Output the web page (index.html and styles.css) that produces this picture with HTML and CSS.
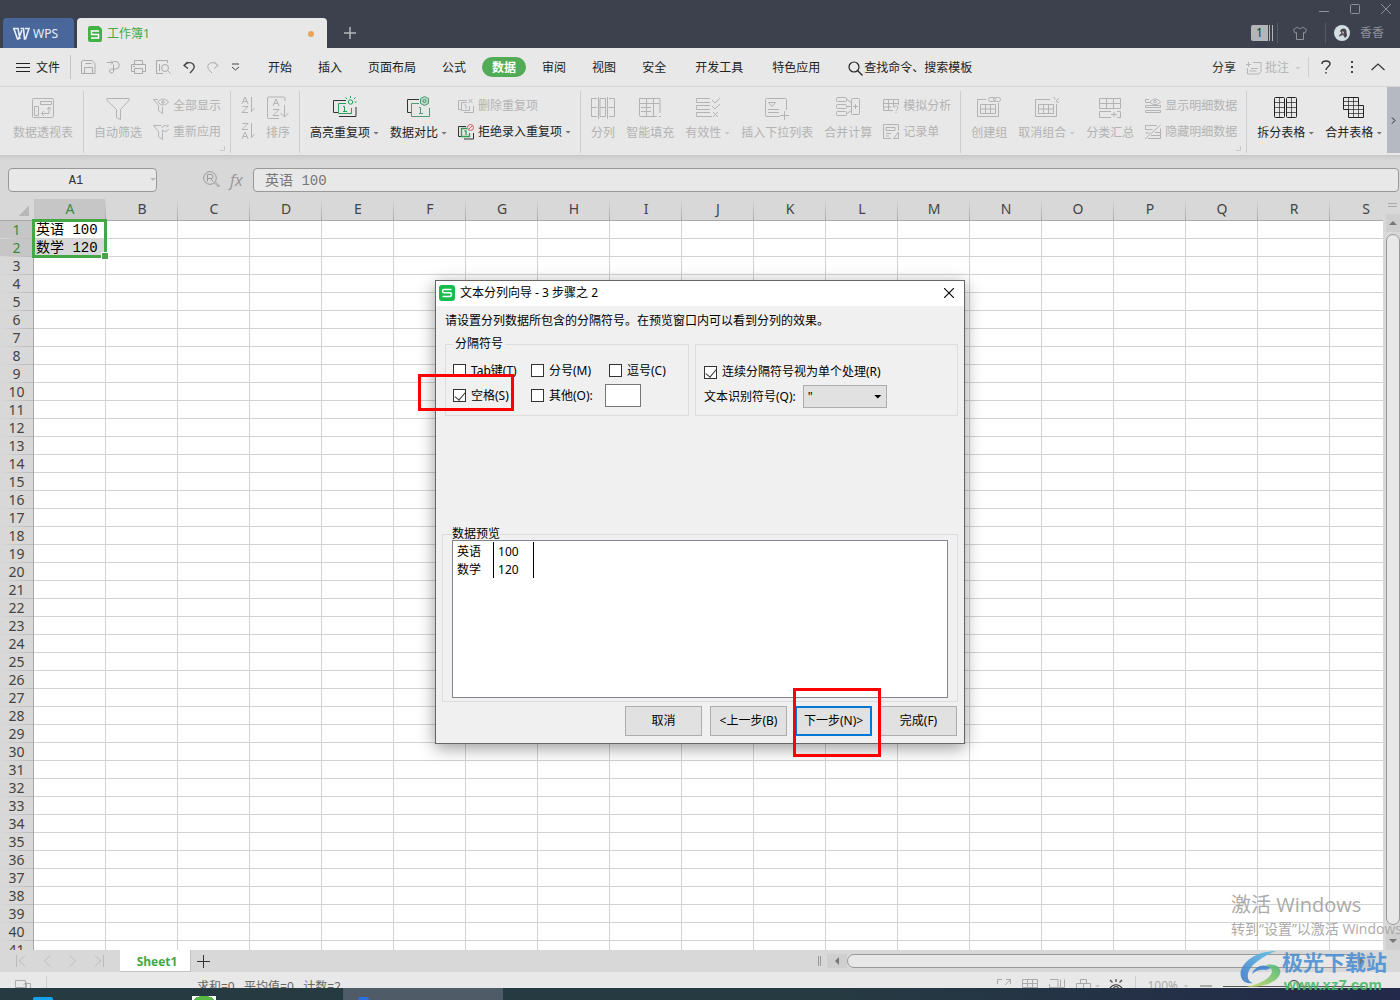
FILE: index.html
```html
<!DOCTYPE html>
<html lang="zh-CN">
<head>
<meta charset="utf-8">
<title>工作簿1 - WPS</title>
<link rel="stylesheet" href="styles.css">
</head>
<body>
<div class="app">
  <header class="titlebar">
    <button class="wps"><svg class="ic" width="18" height="14" viewBox="0 0 18 14" stroke-width="1.6"><path d="M1 1.500h5L8 12M2 2l3.500 10h1L10 3M8.500 1.500h3L12.500 12h1L17 1.500h-4"/></svg>WPS</button>
    <div class="doc-tab">
      <svg width="14" height="16" viewBox="0 0 14 16"><path d="M2 0h9l3 3v11a2 2 0 0 1-2 2H2a2 2 0 0 1-2-2V2a2 2 0 0 1 2-2z" fill="#43b244"/><path d="M11 5H3.500v3.500h7V12H3" fill="none" stroke="#fff" stroke-width="1.500"/></svg>
      <span>工作簿1</span><i class="dirty"></i>
    </div>
    <button class="new-tab" aria-label="新建"><svg class="ic" width="12" height="12" viewBox="0 0 12 12" stroke-width="1.500"><path d="M6 0v12M0 6h12"/></svg></button>
    <div class="title-right">
      <div class="win-controls">
        <svg class="ic" width="10" height="10" viewBox="0 0 10 10"><path d="M0 7.500h10"/></svg>
        <svg class="ic" width="10" height="10" viewBox="0 0 10 10"><rect x=".5" y=".5" width="9" height="9" rx="1"/></svg>
        <svg class="ic" width="10" height="10" viewBox="0 0 10 10"><path d="M0 0l10 10M10 0L0 10"/></svg>
      </div>
      <div class="account">
        <span class="count">1</span><i class="bars"></i><i class="tsep"></i>
        <svg class="ic shirt" width="14" height="14" viewBox="0 0 14 14"><path d="M4.500 1C5 3 9 3 9.500 1L13.500 3.500 12 7l-1.500-.5v7h-7v-7L2 7 .5 3.500z"/></svg>
        <i class="tsep"></i>
        <svg width="16" height="16" viewBox="0 0 16 16"><circle cx="8" cy="8" r="8" fill="#d3dee3"/><path d="M6 6c2-4 7-3 6.500 1l.5 4-2 2-2-3-4 1.500c0-2 2-2.500 2.500-3.500z" fill="#4b4550"/><path d="M8 6l2 1-1 3z" fill="#e3b9a9"/></svg>
        <span class="user">香香</span>
      </div>
    </div>
  </header>

  <nav class="menubar">
    <button class="file"><svg class="ic" width="14" height="11" viewBox="0 0 14 11"><path d="M0 .5h14M0 4.500h14M0 8.500h14"/></svg>文件</button>
    <div class="quick">
      <svg class="ic" width="15" height="15" viewBox="0 0 15 15"><path d="M2.500.5h8.500l3 3v10H.5V2q0-1.500 2-1.500M4.500 3.500h6M3.500 13.500v-6h8v6"/></svg>
      <svg class="ic" width="15" height="15" viewBox="0 0 15 15"><path d="M1 2.500h6M5 .5l2 2-2 2M7.500 1.500h2a3.500 3.500 0 0 1 0 7.500h-4a2 2 0 1 0 2 2.500V4.500"/></svg>
      <svg class="ic" width="15" height="15" viewBox="0 0 15 15"><path d="M3.500 4V.5h8V4M3.500 11.500h-3v-7h14v7h-3M3.500 8.500h8v5h-8zM2 6.500h2"/></svg>
      <svg class="ic" width="15" height="15" viewBox="0 0 15 15"><path d="M7 13.500H.5V.5h11V3M3.500 4v7"/><circle cx="9" cy="8" r="3.500"/><path d="M11.500 10.500l3 3"/></svg>
      <svg class="ic dark" width="13" height="15" viewBox="0 0 13 15" stroke-width="1.300"><path d="M4.500 2L1 5.500l4 3M1.500 5.500C4 2 8 2 10 4c3 3 0 6-3 9"/></svg>
      <svg class="ic" width="13" height="15" viewBox="0 0 13 15"><path d="M8.500 2L12 5.500l-4 3M11.500 5.500C9 2 5 2 3 4c-3 3 0 6 3 9"/></svg>
      <svg class="ic dark" width="9" height="8" viewBox="0 0 9 8"><path d="M1 1h7M1 4l3.500 3L8 4"/></svg>
    </div>
    <div class="tabs">
      <button>开始</button><button>插入</button><button>页面布局</button><button>公式</button><button class="active">数据</button><button>审阅</button><button>视图</button><button>安全</button><button class="wide">开发工具</button><button>特色应用</button>
    </div>
    <button class="search"><svg class="ic" width="15" height="15" viewBox="0 0 15 15" stroke-width="1.200"><circle cx="6" cy="6" r="5"/><path d="M9.500 9.500l5 5"/></svg>查找命令、搜索模板</button>
    <div class="menu-right">
      <button>分享</button>
      <button class="comment" disabled><svg class="ic" width="16" height="14" viewBox="0 0 16 14"><path d="M7 1.500h8v9l-2 2.500H1.500V7M0 3.500h5M2.500 1v5M5 7.500h7M3.500 10h7"/></svg>批注<i class="caret"></i></button>
      <i class="vsep"></i>
      <svg class="ic help" width="10" height="14" viewBox="0 0 10 14" stroke-width="1.400"><path d="M1 4c0-4 8-4 8 0 0 2.500-4 3-4 6M5 12v1.500"/></svg>
      <svg class="more" width="3" height="12" viewBox="0 0 3 12" fill="#444"><path d="M0 0h2v2H0zM0 5h2v2H0zM0 10h2v2H0z"/></svg>
      <svg class="ic fold" width="14" height="8" viewBox="0 0 14 8" stroke-width="1.200"><path d="M.5 7L7 1l6.500 6"/></svg>
    </div>
  </nav>

  <section class="ribbon">
    <div class="group first">
      <button class="big" disabled><svg class="ic" width="22" height="24" viewBox="0 0 22 24"><rect x=".5" y="2.500" width="21" height="19" rx="1"/><path d="M8.500 5.500h11v3h-11zM2.500 10.500h4v9h-4zM10 17.500h7v-6M12 15l-2.500 2.500L12 20M15 13.500l2-2.500 2 2.500"/></svg><span>数据透视表</span></button>
    </div>
    <div class="group corner">
      <button class="big" disabled><svg class="ic" width="24" height="24" viewBox="0 0 24 24"><path d="M1 2.500h22v2l-8.500 9v10l-4-2v-8L1 4.500z"/></svg><span>自动筛选</span></button>
      <div class="stack">
        <button disabled><svg class="ic" width="16" height="16" viewBox="0 0 16 16"><path d="M5 1.500H.5l5 6v5l4 3V9"/><path d="M5 4c3-4 7-4 10.500 0-3.500 4-7.500 4-10.500 0z"/><circle cx="10" cy="4" r="1.300"/></svg>全部显示</button>
        <button disabled><svg class="ic" width="16" height="16" viewBox="0 0 16 16"><path d="M8 1.500H.5l5 6v5l4 3V9M9 4c1-3 4-3 6-1V.5M15.500 5c-1 3-4 3-6 1v2.500"/></svg>重新应用</button>
      </div>
    </div>
    <div class="group">
      <div class="stack">
        <svg class="ic off" width="14" height="18" viewBox="0 0 14 18"><path d="M1 8l3-7 3 7M2 5.500h4M1.500 10.500H7l-6 6h6M10.500 1v15M13.500 12l-3 3.500"/></svg>
        <svg class="ic off" width="14" height="18" viewBox="0 0 14 18"><path d="M1 17l3-7 3 7M2 14.500h4M1.500 1.500H7l-6 6h6M10.500 1v15M13.500 12l-3 3.500"/></svg>
      </div>
      <button class="big" disabled><svg class="ic" width="22" height="24" viewBox="0 0 22 24"><path d="M12 22.500H1.500q-1 0-1-1V2q0-1 1-1H17q1 0 1 1v3M6 10l3-7 3 7M7 7.500h4M6 13.500h6l-6 6h6M17.500 9v12M13.500 17l4 4 4-4"/></svg><span>排序</span></button>
    </div>
    <div class="group">
      <button class="big"><svg class="ic" width="24" height="24" viewBox="0 0 24 24"><path d="M5 16.500H.5v-12H13M6 20.500h17V11" stroke="#333"/><g stroke="#28a05a"><path d="M13 7.500H5.500v10h13V12M10 10.500h1.500v5M10 15.500h4M17.500 0v2M22.500 1.500L21 3M12.500 1.500L14 3M21.500 6h2"/><circle cx="17.500" cy="6" r="2.200"/></g></svg><span>高亮重复项<i class="caret"></i></span></button>
      <button class="big"><svg class="ic" width="24" height="24" viewBox="0 0 24 24"><path d="M4 16.500H.5v-13H12" stroke="#333"/><g stroke="#4f9a72"><path d="M12 7.500H4.500v13h18V12M12 11.500h1.500v6M12 17.500h4"/><path d="M17.500.5l4 2v5l-4 2-4-2v-5z" fill="#b9d5c5"/><circle cx="17.500" cy="5" r="1.500"/></g></svg><span>数据对比<i class="caret"></i></span></button>
      <div class="stack">
        <button disabled><svg class="ic" width="16" height="16" viewBox="0 0 16 16"><path d="M3 11.500H.5v-9H9M6 14.500h9.500V8M9 4.500H3.500v8h8V8M6.500 7h1.500v4M10.500 1l4 4M14.500 1l-4 4"/></svg>删除重复项</button>
        <button><svg class="ic" width="16" height="16" viewBox="0 0 16 16"><path d="M3 12.500H.5v-10H8M6 15h9.500V9" stroke="#333"/><path d="M9 4.500H3.500v8h8V9M6.500 7h1.500v4" stroke="#28a05a" stroke-width="1.300"/><g stroke="#d75a62"><circle cx="12.500" cy="3.500" r="3"/><path d="M10.500 5.500l4-4"/></g></svg>拒绝录入重复项<i class="caret"></i></button>
      </div>
    </div>
    <div class="group">
      <button class="big" disabled><svg class="ic" width="24" height="24" viewBox="0 0 24 24"><path d="M6 2.500H.5v18H6M0 11.500h6M9 2.500h5.500v18H9zM18 2.500h5.500v18H18M17.500 11.500h6M7.500 1v22M16.500 1v22M9 11.500h5"/></svg><span>分列</span></button>
      <button class="big" disabled><svg class="ic" width="22" height="24" viewBox="0 0 22 24"><path d="M18 20.500H1.500q-1 0-1-1v-17h20.500V17M.5 7.500h20M7.500 2v18M14.500 2v18M2 11.500h10M2 15.500h10M20 20.500h2"/></svg><span>智能填充</span></button>
      <button class="big" disabled><svg class="ic" width="24" height="24" viewBox="0 0 24 24"><path d="M14 2.500H.5v4H14M14 9.500H.5v4H14M14 16.500H.5v4H16M16 4l3 3 5-5M16 10l3 3 5-5M17 16l5 5M22 16l-5 5"/></svg><span>有效性<i class="caret"></i></span></button>
      <button class="big" disabled><svg class="ic" width="24" height="24" viewBox="0 0 24 24"><path d="M15 20.500H2q-1.500 0-1.500-1.500V3.500q0-1 1-1h19q1 0 1 1V14M3 13.500h11M3 16.500h11M3.500 6.500h7l-3.500 4zM19.500 15v9M15 19.500h9"/></svg><span>插入下拉列表</span></button>
      <button class="big" disabled><svg class="ic" width="24" height="24" viewBox="0 0 24 24"><rect x=".5" y="1.500" width="10" height="4" rx="1"/><rect x=".5" y="8.500" width="10" height="4" rx="1"/><rect x=".5" y="15.500" width="10" height="4" rx="1"/><rect x="15.500" y="2.500" width="8" height="16" rx="1"/><path d="M11 3.500l4 3M11 10.500h4M11 17.500l4-3M17 10.500h5M19.500 8v5"/></svg><span>合并计算</span></button>
      <div class="stack">
        <button disabled><svg class="ic" width="16" height="16" viewBox="0 0 16 16"><path d="M10 12.500H.5v-11h15V7M.5 5.500h15M.5 9h8M5.500 1.500v11M10.500 1.500v7M11 10c0-3 4-3 4 0 0 1-2 1.500-2 3M13 14v1"/></svg>模拟分析</button>
        <button disabled><svg class="ic" width="16" height="16" viewBox="0 0 16 16"><path d="M8 14.500H.5v-14h15v6M3 3.500h9v3H3zM3 9.500h5M3 12h3M15.500 8l-5 6.500h5z"/></svg>记录单</button>
      </div>
    </div>
    <div class="group corner">
      <button class="big" disabled><svg class="ic" width="24" height="24" viewBox="0 0 24 24"><path d="M9 3.500H.5v17h21V7M3.500 8.500h15v9h-15zM3.500 13h15M8.500 8.500v9M13.500 8.500v9"/><rect x="11.500" y="1.500" width="7" height="4" rx="2"/><rect x="16.500" y="1.500" width="7" height="4" rx="2"/></svg><span>创建组</span></button>
      <button class="big" disabled><svg class="ic" width="24" height="24" viewBox="0 0 24 24"><path d="M15 3.500H.5v17h21V8M3.500 8.500h15v9h-15zM3.500 13h15M8.500 8.500v9M13.500 8.500v9M19 1l1 2.500M24 2l-3 3M21 6h3"/></svg><span>取消组合<i class="caret"></i></span></button>
      <button class="big" disabled><svg class="ic" width="22" height="24" viewBox="0 0 22 24"><path d="M.5 2.500h21v10H.5zM.5 7.500h21M7.500 2.500v10M14.500 2.500v10M12 15.500H.5v6H12M18 15.500h3.500v6H18M12 18.500h6M15 16v5"/></svg><span>分类汇总</span></button>
      <div class="stack">
        <button disabled><svg class="ic" width="16" height="16" viewBox="0 0 16 16"><path d="M4 1.500H.5v3H5M.5 7.500h15v2H.5zM.5 12.500h15v2H.5zM5 4c3-4 7-4 10.500 0-3.500 3.500-7.500 3.500-10.500 0z"/><circle cx="10" cy="3.500" r="1.300"/></svg>显示明细数据</button>
        <button disabled><svg class="ic" width="16" height="16" viewBox="0 0 16 16"><path d="M0 15L15.500 1M0 1.500h12M.5 1.500v4h7M.5 9h4M15.500 4.500v10H3M10 8.500h5M6 11.500h9"/></svg>隐藏明细数据</button>
      </div>
    </div>
    <div class="group last">
      <button class="big"><svg class="ic" width="24" height="24" viewBox="0 0 24 24"><rect x=".5" y="1.500" width="10" height="20" rx="1"/><rect x="12.500" y="1.500" width="10" height="20" rx="1"/><path d="M5.500 2v19M17.500 2v19M1 6.500h9M1 11.500h9M1 16.500h9M13 6.500h9M13 11.500h9M13 16.500h9" stroke-width=".7"/></svg><span>拆分表格<i class="caret"></i></span></button>
      <button class="big"><svg class="ic" width="22" height="24" viewBox="0 0 22 24"><path d="M.5 1.500h15v8h5v12h-15v-8h-5z"/><path d="M5.500 2v12M10.500 2v19M15.500 9v12M1 5.500h14M1 9.500h15M5 13.500h15M5 17.500h15" stroke-width=".7"/></svg><span>合并表格<i class="caret"></i></span></button>
    </div>
    <button class="ribbon-more" aria-label="更多"><svg class="ic" width="5" height="7" viewBox="0 0 5 7"><path d="M1 .5l3 3-3 3"/></svg></button>
  </section>

  <section class="formula-bar">
    <div class="name-box"><input class="mono" value="A1" aria-label="名称框"><i class="caret"></i></div>
    <svg class="ic" width="17" height="17" viewBox="0 0 17 17"><circle cx="7" cy="7" r="6.300"/><path d="M4.500 10.500v-7H8q2 0 2 2t-2 2H5M8 7.500l2 3M11.500 12l4 4 1-1-4-4"/></svg>
    <span class="fx">fx</span>
    <input class="formula mono" value="英语 100" aria-label="编辑栏">
  </section>

  <main class="workspace">
    <div class="sheet">
      <table id="grid"></table>
      <div class="selection"><i></i></div>
    </div>
    <div class="vscroll">
      <i class="split"></i>
      <div class="arrow"><i class="tri up"></i></div>
      <div class="thumb"></div>
      <div class="arrow"><i class="tri down"></i></div>
    </div>
  </main>

  <footer class="sheet-bar">
    <div class="sheet-nav">
      <svg class="ic" width="10" height="12" viewBox="0 0 10 12"><path d="M.5 0v12M9 .5L3.500 6 9 11.500"/></svg>
      <svg class="ic" width="7" height="12" viewBox="0 0 7 12"><path d="M6 .5L.5 6 6 11.500"/></svg>
      <svg class="ic" width="7" height="12" viewBox="0 0 7 12"><path d="M1 .5L6.500 6 1 11.500"/></svg>
      <svg class="ic" width="10" height="12" viewBox="0 0 10 12"><path d="M9.500 0v12M1 .5L6.500 6 1 11.500"/></svg>
    </div>
    <button class="sheet-tab">Sheet1</button>
    <button class="add-sheet" aria-label="新建工作表"><svg class="ic" width="13" height="13" viewBox="0 0 13 13"><path d="M6.500 0v13M0 6.500h13"/></svg></button>
    <div class="hscroll"><i class="grip"></i><span class="harrow"><i class="tri left"></i></span><i class="hthumb"></i><span class="harrow"><i class="tri right"></i></span></div>
  </footer>
  <div class="status-clip">
    <div class="statusbar">
      <svg class="ic" width="16" height="12" viewBox="0 0 16 12"><path d="M.5.5h10v7H.5zM8.500 4.500l3-2v7M11.500 3.500h4v5h-3M3 10.500h4"/></svg>
      <i class="vsep"></i>
      <span class="stats">求和=0&nbsp;&nbsp; 平均值=0&nbsp;&nbsp; 计数=2</span>
      <div class="view-tools">
        <svg class="ic" width="14" height="14" viewBox="0 0 14 14"><path d="M5 .5H.5V5M9 .5h4.500V5M.5 9v4.500H5M8 6l5-5"/></svg>
        <svg class="ic" width="16" height="14" viewBox="0 0 16 14"><path d="M.5.5h15v12H.5zM.5 4.500h15M.5 8.500h15M5.500.5v12M10.500.5v12"/></svg>
        <svg class="ic" width="16" height="14" viewBox="0 0 16 14"><path d="M1 .5h8v8H1M.5 5v7M11.500.5v8M15.500.5v8h-6"/></svg>
        <span class="layout"><svg class="ic" width="15" height="14" viewBox="0 0 15 14"><path d="M4.500 4.500v-4h6v4M.5 4.500h14v7H.5zM7.500 4v9"/></svg><i class="caret"></i></span>
        <svg class="ic dark" width="16" height="14" viewBox="0 0 16 14" stroke-width="1.200"><path d="M1 11c3-7 11-7 14 0M8 0v3M2 1l2.500 2.500M14 1l-2.500 2.500"/><circle cx="8" cy="10" r="2.500"/></svg>
        <i class="vsep"></i>
        <span>100%<i class="caret"></i></span>
        <svg class="ic" width="12" height="14" viewBox="0 0 12 14" stroke-width="2"><path d="M0 7h12"/></svg>
        <input type="range" aria-label="缩放">
      </div>
    </div>
  </div>
  <div class="taskbar">
    <i class="app-blue"></i><i class="app-green"></i><span class="task-active"><i></i></span>
  </div>

  <div class="activate"><strong>激活 Windows</strong><span>转到“设置”以激活 Windows</span></div>
  <div class="site-mark">
    <svg width="42" height="40" viewBox="0 0 42 40"><defs><linearGradient id="sb" x1="1" y1="0" x2="0" y2="1"><stop offset="0" stop-color="#5bc3ec"/><stop offset="1" stop-color="#3e77c4"/></linearGradient><linearGradient id="sg" x1="1" y1="0" x2="0" y2="1"><stop offset="0" stop-color="#48b777"/><stop offset="1" stop-color="#c5d957"/></linearGradient></defs><path d="M36 2C12 2-2 17 1 28c2 6 8 7 12 6-7-2-7-11 0-18C19 10 28 5 36 2z" fill="url(#sb)"/><path d="M12 25c3-8 12-11 19-6l-5 2c-5-1-10 0-14 4z" fill="#3e83cd"/><path d="M26 16c10-2 16 3 14 9C37 34 22 38 6 38c16-3 25-10 26-15 0-3-2-5-6-7z" fill="url(#sg)"/></svg>
    <div><b>极光下载站</b><em>www.xz7.com</em></div>
  </div>

  <div class="modal-layer">
    <form class="dialog" onsubmit="return false">
      <div class="dialog-title">
        <svg width="16" height="16" viewBox="0 0 16 16"><rect width="16" height="16" rx="3" fill="#16bd4c"/><path d="M12.500 4.500H5q-1.500 0-1.500 1.500T5 7.700h6q1.500 0 1.500 1.800T11 11.500H3.500" fill="none" stroke="#fff" stroke-width="1.600"/></svg>
        <span>文本分列向导 - 3 步骤之 2</span>
        <button type="button" class="close" aria-label="关闭"><svg class="ic" width="10" height="10" viewBox="0 0 10 10" stroke-width="1.100"><path d="M0 0l10 10M10 0L0 10"/></svg></button>
      </div>
      <div class="dialog-body">
        <p>请设置分列数据所包含的分隔符号。在预览窗口内可以看到分列的效果。</p>
        <div class="options">
          <fieldset class="delims">
            <legend>分隔符号</legend>
            <div class="checks">
              <label><input type="checkbox">Tab键(T)</label>
              <label><input type="checkbox">分号(M)</label>
              <label><input type="checkbox">逗号(C)</label>
              <label><input type="checkbox" checked>空格(S)</label>
              <label><input type="checkbox">其他(O):</label>
              <input type="text" class="other" aria-label="其他分隔符">
            </div>
          </fieldset>
          <fieldset class="extra">
            <label><input type="checkbox" checked>连续分隔符号视为单个处理(R)</label>
            <div class="qualifier"><label for="q">文本识别符号(Q):</label><span class="pick"><select id="q"><option>"</option></select><i class="tri down"></i></span></div>
          </fieldset>
        </div>
        <fieldset class="preview">
          <legend>数据预览</legend>
          <div class="preview-box">
            <table><tr><td>英语</td><td>100</td></tr><tr><td>数学</td><td>120</td></tr></table>
          </div>
        </fieldset>
        <div class="actions">
          <button type="button">取消</button><button type="button">&lt;上一步(B)</button><button type="button" class="primary">下一步(N)&gt;</button><button type="button">完成(F)</button>
        </div>
      </div>
      <i class="mark mark-space"></i><i class="mark mark-next"></i>
    </form>
  </div>
</div>
<script src="grid.js"></script>
</body>
</html>
```
FILE: styles.css
```css
* { box-sizing: border-box; }
body { margin: 0; font: 12px/16px "Noto Sans", "Noto Sans CJK SC", sans-serif; color: #222; }
button, input, select { font: inherit; color: inherit; margin: 0; padding: 0; }
button { border: 0; background: none; white-space: nowrap; }
i { font-style: normal; display: block; flex: none; }
svg { display: block; flex: none; }
.ic { fill: none; stroke: currentColor; }
.mono { font: 14px/16px "Liberation Mono", "Noto Sans CJK SC", monospace; }
.app { position: relative; display: flex; flex-direction: column; height: 100vh; overflow: hidden; background: #d8d8d8; }
.caret { width: 9px; height: 3px; display: inline-block; background: currentColor; opacity: .6; clip-path: polygon(3px 0, 9px 0, 6px 3px); }
.vsep { width: 1px; height: 20px; background: #cfcfcf; }
.tri { width: 8px; height: 4px; background: #777; }
.up { clip-path: polygon(50% 0, 100% 100%, 0 100%); }
.down { clip-path: polygon(0 0, 100% 0, 50% 100%); }
.left { width: 4px; height: 8px; clip-path: polygon(100% 0, 100% 100%, 0 50%); }
.right { width: 4px; height: 8px; clip-path: polygon(0 0, 100% 50%, 0 100%); }

.titlebar { flex: none; display: flex; align-items: flex-end; height: 48px; padding-left: 3px; background: #3d414d; }
.wps { display: flex; align-items: center; gap: 3px; width: 71px; height: 30px; padding: 2px 0 0 9px; border-radius: 4px 4px 0 0; background: #4a679b; color: #e8eef8; }
.doc-tab { display: flex; align-items: center; gap: 5px; width: 250px; height: 30px; margin-left: 3px; padding: 2px 13px 0 11px; border-radius: 4px 4px 0 0; background: #e8e8e8; color: #43a843; }
.dirty { width: 6px; height: 6px; margin-left: auto; border-radius: 3px; background: #e8a35c; }
.new-tab { width: 46px; height: 30px; display: grid; place-content: center; color: #b5b7bc; }
.title-right { display: flex; flex-direction: column; align-items: flex-end; margin-left: auto; color: #8d9099; }
.win-controls { display: flex; gap: 21px; padding: 0 9px 7px 0; }
.account { display: flex; align-items: center; height: 24px; margin-bottom: 3px; padding-right: 16px; }
.count { width: 17px; height: 16px; background: #b4b5b9; color: #333; text-align: center; border-radius: 2px 0 0 2px; }
.bars { width: 4px; height: 16px; border: solid #b4b5b9; border-width: 0 1px; margin-left: 1px; }
.tsep { width: 1px; height: 20px; background: #575a65; margin: 0 15px 0 4px; }
.shirt { margin-right: 14px; }
.shirt + .tsep { margin: 0 8px 0 4px; }
.user { margin-left: 10px; }

.menubar { flex: none; display: flex; align-items: center; height: 39px; padding-right: 15px; border-bottom: 1px solid #d5d5d5; background: #e8e8e8; }
.menubar button { padding-top: 2px; }
.menubar .file { display: flex; align-items: center; gap: 6px; height: 24px; padding: 2px 10px 0 16px; border-right: 1px solid #c4c4c4; }
.quick { display: flex; align-items: center; gap: 10px; padding-left: 10px; color: #aaa; }
.dark { color: #444; }
.quick .dark { margin-left: 2px; }
.tabs { display: flex; gap: 6px; margin-left: 18px; }
.menubar .tabs button { height: 20px; padding: 1px 10px 0; border-radius: 10px; }
.menubar .tabs .wide { padding: 1px 13px 0; }
.tabs .active { background: #52ab55; color: #fff; font-weight: bold; }
.search { display: flex; align-items: center; gap: 1px; margin-left: 18px; }
.menu-right { display: flex; align-items: center; margin-left: auto; gap: 10px; color: #333; }
.comment { display: flex; align-items: center; gap: 3px; color: #b5b5b5; }
.menu-right .vsep { margin-left: -3px; }
.help { margin-left: 2px; }
.more { margin-left: 10px; }
.fold { margin-left: 7px; }

.ribbon { flex: none; display: flex; height: 69px; padding-top: 4px; border-bottom: 1px solid #c8c8c8; background: #e8e8e8; position: relative; }
.group { display: flex; align-items: flex-start; gap: 11px; height: 62px; padding: 0 9px 0 10px; border-right: 1px solid #cdcdcd; flex: none; }
.first { padding: 0 10px 0 13px; }
.last { border: 0; }
.corner { background: linear-gradient(#ccc, #ccc) right 5px bottom 2px / 5px 1px no-repeat, linear-gradient(#ccc, #ccc) right 5px bottom 2px / 1px 5px no-repeat; }
.big { display: flex; flex-direction: column; align-items: center; gap: 5px; padding-top: 5px; }
.big span, .stack button { display: flex; align-items: center; }
.ribbon button:disabled, .off { color: #b3b3b3; }
.stack { display: flex; flex-direction: column; gap: 8px; padding-top: 5px; }
.stack button { gap: 4px; height: 18px; padding-top: 2px; }
.stack .caret { margin-left: -4px; }
.ribbon-more { position: absolute; right: 0; top: 0; width: 13px; height: 66px; display: grid; place-content: center; background: #b5b9c2; }

.formula-bar { flex: none; display: flex; align-items: center; height: 42px; padding: 5px 1px 0 8px; background: linear-gradient(#cdcdcd, #d8d8d8 5px); color: #999; }
.name-box { display: flex; align-items: center; width: 149px; height: 24px; margin-right: 46px; border: 1px solid #999; border-radius: 4px; background: #e8e8e8; }
.name-box input { flex: 1; min-width: 0; padding: 2px 4px 0 0; border: 0; background: none; text-align: center; color: #333; font-size: 12px; }
.fx { width: 33px; padding-left: 10px; font: italic 16px/20px "Open Sans", sans-serif; }
.formula { flex: 1; height: 24px; padding: 0 11px 1px; border: 1px solid #999; border-radius: 4px; background: #e8e8e8; color: #777; }

.workspace { flex: 1; min-height: 0; display: flex; padding-top: 1px; }
.sheet { flex: 1; min-width: 0; position: relative; overflow: hidden; }
#grid { table-layout: fixed; border-spacing: 0; width: max-content; background: #fff; font-size: 14px; line-height: 15px; }
#grid th { padding: 0 0 2px; font-weight: normal; color: #444; background: #d8d8d8; }
#grid thead th { width: 72px; height: 22px; border-bottom: 1px solid #a8a8a8; background: linear-gradient(#d8d8d8, #a8a8a8) right / 1px 100% no-repeat #d8d8d8; }
#grid thead th:first-child { width: 34px; background: linear-gradient(135deg, transparent 50%, #b8b8b8 50%) 18px 6px / 11px 11px no-repeat #d8d8d8; }
#grid tbody th { height: 18px; border-right: 1px solid #a8a8a8; background: linear-gradient(90deg, #d8d8d8, #b8b8b8) bottom / 100% 1px no-repeat #d8d8d8; }
#grid thead th.on, #grid tbody th.on { background-color: #c6c6c6; color: #3a8c3f; }
#grid td { height: 18px; padding: 2px 2px 0; border: solid #d2d2d2; border-width: 0 1px 1px 0; line-height: 15px; white-space: nowrap; overflow: hidden; color: #000; }
#grid td.picked { background: #d8d8d8; }
.selection { position: absolute; left: 32px; top: 20px; width: 75px; height: 39px; border: 3px solid #43a843; }
.selection i { position: absolute; right: -4px; bottom: -4px; width: 6px; height: 6px; background: #43a843; outline: 1px solid #fff; }
.vscroll { width: 17px; display: flex; flex-direction: column; padding: 4px 0 0 3px; }
.split { height: 4px; margin: 0 3px 7px 2px; border: solid #aaa; border-width: 1px 0; }
.arrow { height: 18px; flex: none; display: grid; place-content: center; background: #cfcfcf; }
.thumb { flex: 1; margin-top: 2px; margin-bottom: 7px; border: 1px solid #999; border-radius: 7px; background: #e8e8e8; }

.sheet-bar { flex: none; display: flex; height: 22px; color: #bbb; }
.sheet-nav { width: 120px; display: flex; align-items: center; gap: 18px; padding-left: 16px; }
.sheet-tab { width: 71px; height: 22px; border: solid #c4c4c4; border-width: 0 1px 1px 0; background: #fff; color: #43a843; font: bold 12px/20px "Open Sans", sans-serif; padding: 2px 0 0 4px; }
.add-sheet { padding: 0 6px; color: #333; }
.hscroll { flex: 1; max-width: 554px; margin-left: auto; margin-right: 28px; display: flex; align-items: center; }
.grip { width: 3px; height: 10px; border: solid #999; border-width: 0 1px; margin-right: 6px; }
.harrow { width: 20px; height: 14px; display: grid; place-content: center; background: #cfcfcf; }
.hthumb { flex: 1; height: 14px; border: 1px solid #999; border-radius: 7px; background: #e8e8e8; }
.status-clip { flex: none; height: 16px; overflow: hidden; }
.statusbar { height: 28px; display: flex; align-items: center; padding-left: 15px; background: #e8e8e8; color: #aaa; }
.statusbar > .vsep { margin-left: 15px; }
.stats { margin-left: 150px; padding-top: 1px; color: #666; }
.view-tools { display: flex; align-items: center; gap: 11px; margin-left: auto; padding-right: 35px; }
.view-tools span { display: flex; align-items: center; gap: 2px; }
.view-tools .layout { gap: 0; margin-right: -3px; }
.view-tools input { appearance: none; width: 142px; height: 12px; background: linear-gradient(#555, #555) center / 100% 1px no-repeat; }
.view-tools input::-webkit-slider-thumb { appearance: none; width: 12px; height: 12px; border: 1px solid #333; border-radius: 6px; background: #e8e8e8; }
.taskbar { flex: none; display: flex; align-items: flex-end; height: 12px; padding-left: 33px; background: linear-gradient(90deg, #263a42, #263a42 60%, #22294a); }
.app-blue { width: 20px; height: 3px; border-radius: 2px 2px 0 0; background: #12a4ee; }
.app-green { width: 24px; height: 4px; margin-left: 139px; background: radial-gradient(ellipse 10px 4px at 50% 100%, #58b843 98%, #fff); }
.task-active { width: 160px; height: 12px; margin-left: 127px; padding: 9px 15px 0; background: #4f5b66; }
.task-active i { width: 11px; height: 3px; border-radius: 6px 6px 0 0; background: #2b6fe0; }

.activate { position: absolute; left: calc(100% - 169px); bottom: 59px; color: #aaa; white-space: nowrap; font-family: "Open Sans", "Noto Sans CJK SC", sans-serif; }
.activate strong, .activate span { display: block; font-weight: normal; font-size: 20px; line-height: 24px; }
.activate span { font-size: 14px; }
.site-mark { position: absolute; right: 8px; bottom: 6px; display: flex; width: 152px; opacity: .88; }
.site-mark b, .site-mark em { display: block; font: bold 21px/24px "Noto Sans CJK SC", sans-serif; color: #4a8fd2; white-space: nowrap; }
.site-mark em { margin: 3px 0 0 2px; font: bold 15px/18px "Liberation Sans", sans-serif; color: #45b865; }

.modal-layer { position: absolute; inset: 0; display: flex; justify-content: center; align-items: flex-start; padding-top: 280px; }
.dialog { position: relative; width: 530px; border: 1px solid #666; background: #f0f0f0; color: #000; box-shadow: 0 4px 16px rgba(0, 0, 0, .4); }
.dialog-title { display: flex; align-items: center; gap: 5px; height: 25px; padding: 0 10px 1px 3px; background: #fff; }
.close { margin-left: auto; }
.dialog-body { padding: 7px 6px 7px; }
.dialog p { margin: 0 3px 7px; }
.options { display: grid; grid-template-columns: 244px 1fr; gap: 6px; margin-left: 3px; margin-bottom: 110px; }
fieldset { margin: 0; border: 1px solid #dcdcdc; padding: 0; min-width: 0; }
legend { padding: 0 2px; margin-left: 7px; }
.delims { height: 80px; }
.checks { display: grid; grid-template-columns: 78px 74px 1fr; grid-template-rows: 25px 25px; align-items: center; padding: 6px 7px 0; }
.checks .other { justify-self: start; }
.dialog label { display: flex; align-items: center; gap: 5px; white-space: nowrap; }
.checks > :nth-child(3) { margin-left: 4px; }
input[type="checkbox"] { appearance: none; flex: none; display: grid; justify-content: center; width: 13px; height: 13px; border: 1px solid #333; background: #fff; }
input[type="checkbox"]:checked::after { content: ""; width: 5px; height: 9px; border: solid #333; border-width: 0 1px 1px 0; transform: rotate(40deg); }
.other { width: 36px; height: 23px; border: 1px solid #777; background: #fff; }
.extra { margin-top: 8px; padding: 14px 8px 0; }
.extra > label { height: 26px; }
.qualifier { display: flex; align-items: center; gap: 7px; }
.pick { display: grid; align-items: center; }
.pick > * { grid-area: 1 / 1; }
.pick select { appearance: none; width: 84px; height: 23px; padding: 0 4px; border: 1px solid #adadad; border-radius: 0; background: #e1e1e1; }
.pick .tri { justify-self: end; margin-right: 5px; background: #000; pointer-events: none; }
.preview { height: 176px; padding: 0 9px; }
.preview legend { margin-left: 0; padding: 0; line-height: 16px; }
.preview-box { height: 158px; margin-top: -2px; padding-top: 1px; border: 1px solid #82878f; background: #fff; }
.preview-box table { border-spacing: 0; }
.preview-box td { height: 18px; min-width: 40px; padding: 2px 12px 0 4px; border-right: 1px solid #000; }
.actions { display: flex; justify-content: flex-end; gap: 8px; margin: 4px 1px 0 0; }
.actions button { width: 77px; height: 30px; border: 1px solid #adadad; background: #e1e1e1; }
.actions .primary { border: 2px solid #0078d7; }
.mark { position: absolute; border: 3px solid #f00; pointer-events: none; }
.mark-space { left: -18px; top: 93px; width: 96px; height: 37px; }
.mark-next { left: 357px; top: 407px; width: 88px; height: 69px; }
```
FILE: grid.js
```js
const data = ["英语 100", "数学 120"];
const grid = document.getElementById("grid");
const sheet = grid.parentElement;

// Fill the visible sheet area with whole columns and rows.
function draw() {
  const columns = Math.min(26, Math.ceil((sheet.clientWidth - 34) / 72));
  const rows = Math.ceil((sheet.clientHeight - 22) / 18);
  grid.style.width = `${34 + columns * 72}px`;
  let html = "<thead><tr><th></th>";
  for (let c = 0; c < columns; c++) {
    html += `<th${c === 0 ? ' class="on"' : ""}>${String.fromCharCode(65 + c)}</th>`;
  }
  html += "</tr></thead><tbody>";
  for (let r = 0; r < rows; r++) {
    html += `<tr><th${r < data.length ? ' class="on"' : ""}>${r + 1}</th>`;
    for (let c = 0; c < columns; c++) {
      const text = c === 0 && data[r] ? data[r] : "";
      html += `<td class="mono${c === 0 && r === 1 ? " picked" : ""}">${text}</td>`;
    }
    html += "</tr>";
  }
  grid.innerHTML = html + "</tbody>";
}

draw();
window.addEventListener("resize", draw);
```
